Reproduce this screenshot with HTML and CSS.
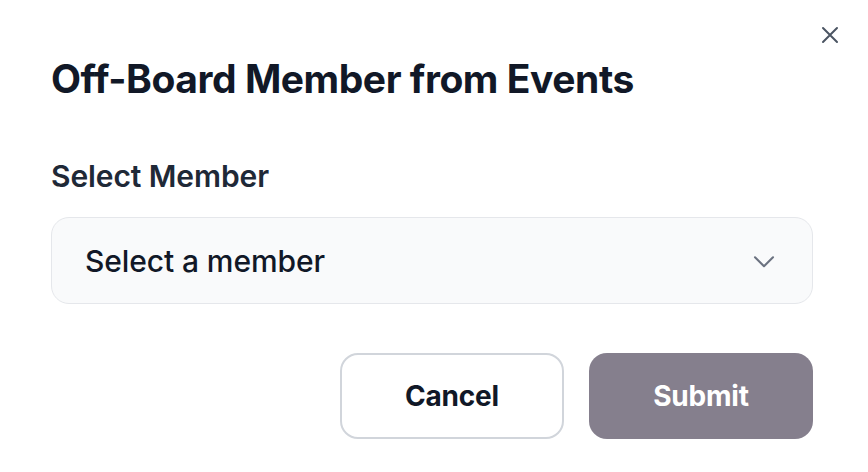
FILE: index.html
```html
<html>
    <head>
        <link rel="stylesheet" href="styles.css">
    </head>
    <body>
        <div class="modal">
            <button type="button" class="close" aria-label="Close">
                <svg viewBox="0 0 24 24" width="24" height="24" fill="none" stroke="currentColor" stroke-width="2" stroke-linecap="round">
                    <path d="M5 5L19 19M19 5L5 19"/>
                </svg>
            </button>
            <h2 class="title">Off-Board Member from Events</h2>
            <form class="form">
                <label class="label" for="member">Select Member</label>
                <div class="select">
                    <span class="placeholder">Select a member</span>
                    <svg class="chevron" viewBox="0 0 24 24" width="36" height="36" fill="none" stroke="currentColor" stroke-width="1.4" stroke-linecap="round" stroke-linejoin="round">
                        <path d="M6 9.5l6 6 6-6"/>
                    </svg>
                </div>
                <div class="actions">
                    <button type="button" class="btn cancel">Cancel</button>
                    <button type="button" class="btn submit" disabled>Submit</button>
                </div>
            </form>
        </div>
    </body>
</html>
```

FILE: styles.css
```css
body{
    margin: 0;
    background: #ffffff;
    font-family: Inter, "Noto Sans", sans-serif;
}
.modal{
    position: relative;
    padding: 53px 55px 0 51px;
}
.close{
    position: absolute;
    top: 23px;
    right: 26px;
    background: none;
    border: 0;
    padding: 0;
    color: #4b5563;
    cursor: pointer;
}
.close svg{
    display: block;
}
.title{
    margin: 0;
    font-size: 39px;
    line-height: 52px;
    font-weight: 700;
    letter-spacing: -0.45px;
    color: #111827;
}
.form{
    margin-top: 51px;
}
.label{
    display: block;
    font-size: 30px;
    line-height: 40px;
    font-weight: 600;
    letter-spacing: -0.1px;
    color: #1f2937;
}
.select{
    margin-top: 21px;
    height: 85px;
    display: flex;
    align-items: center;
    justify-content: space-between;
    padding: 0 30px 0 33px;
    background: #f9fafb;
    border: 1px solid #e5e7eb;
    border-radius: 18px;
}
.placeholder{
    font-size: 30px;
    font-weight: 500;
    letter-spacing: -0.1px;
    color: #111827;
}
.chevron{
    color: #6b7280;
}
.actions{
    display: flex;
    justify-content: flex-end;
    gap: 25px;
    margin-top: 49px;
}
.btn{
    width: 224px;
    height: 86px;
    border-radius: 18px;
    font-family: Inter, "Noto Sans", sans-serif;
    font-size: 28px;
    font-weight: 700;
    letter-spacing: -0.2px;
}
.cancel{
    background: #ffffff;
    border: 2px solid #d1d5db;
    color: #111827;
}
.submit{
    background: #857f8d;
    border: 0;
    color: #ffffff;
}
```
